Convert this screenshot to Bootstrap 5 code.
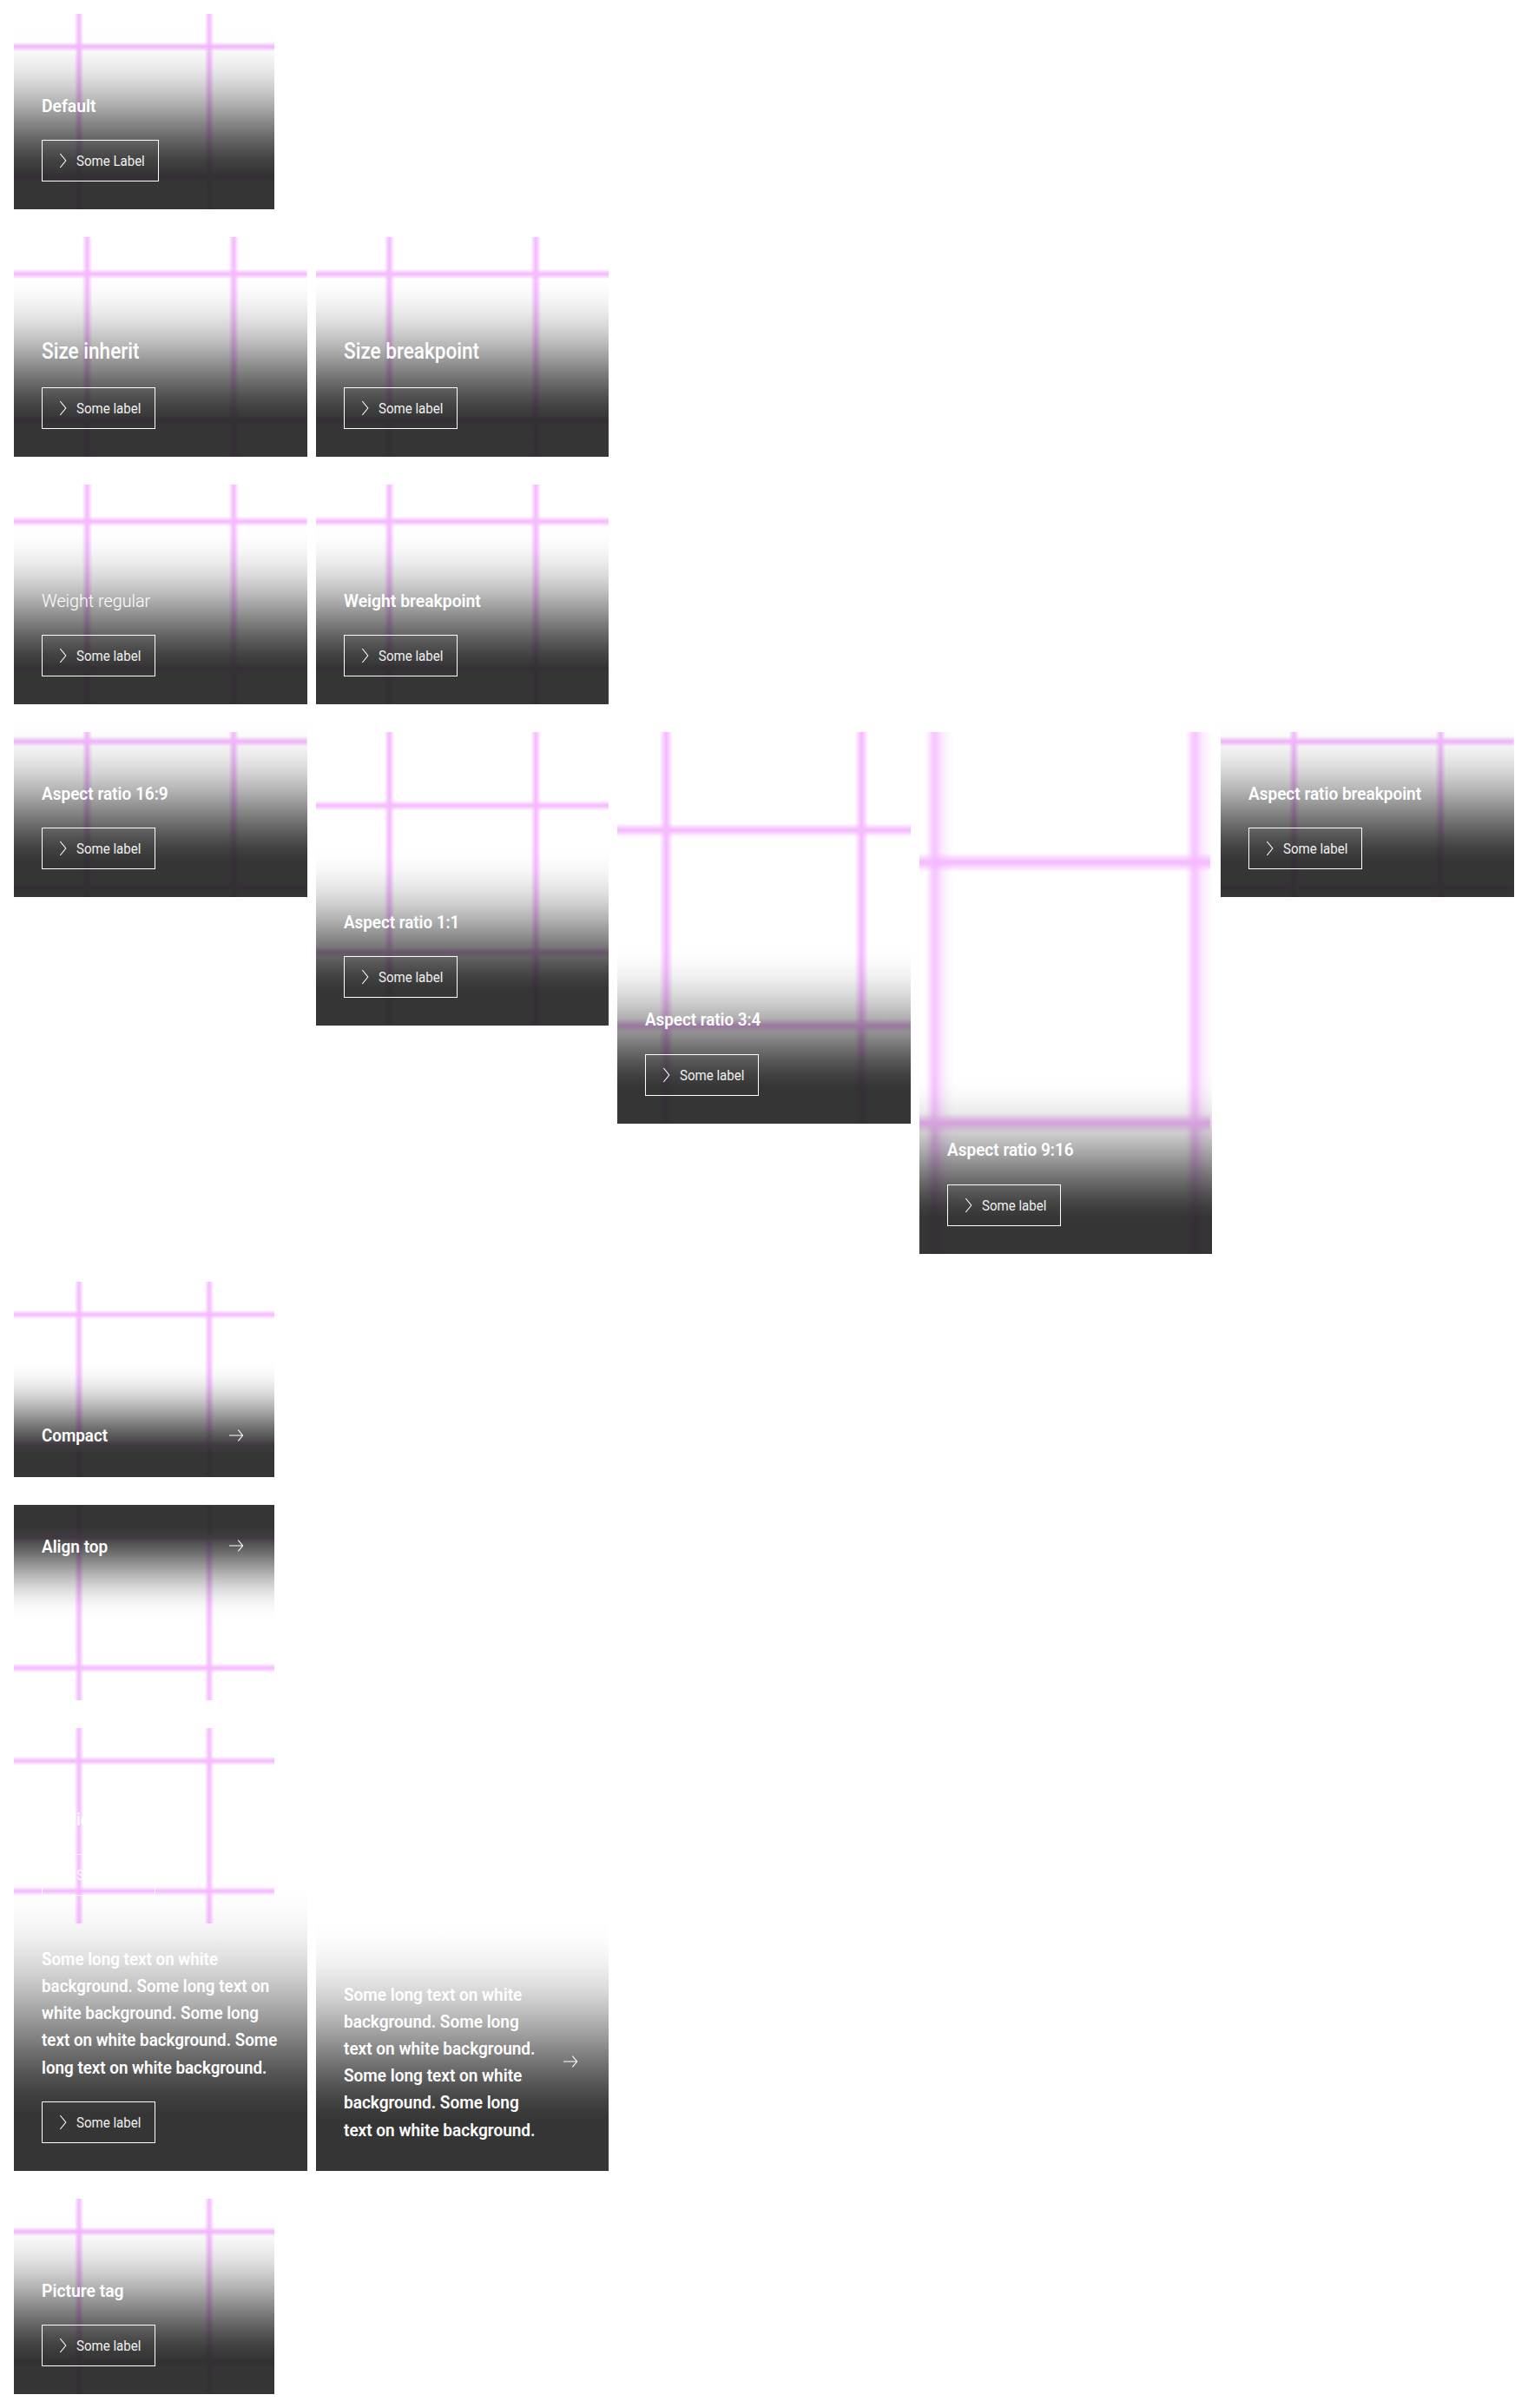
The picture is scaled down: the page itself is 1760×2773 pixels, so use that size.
<!DOCTYPE html>
<html lang="en">
<head>
<meta charset="utf-8">
<title>Link tile</title>
<link href="https://cdn.jsdelivr.net/npm/bootstrap@5.3.0/dist/css/bootstrap.min.css" rel="stylesheet">
<script src="https://cdn.jsdelivr.net/npm/bootstrap@5.3.0/dist/js/bootstrap.bundle.min.js"></script>
<style>
body{font-family:Roboto,"Liberation Sans",sans-serif;background:#fff;color:#fff}
.tile-stack{gap:32px}
.tile-row{display:grid;grid-template-columns:repeat(5,minmax(0,1fr));gap:10px;align-items:start}
.tile{display:grid;aspect-ratio:4/3;color:#fff;text-decoration:none;grid-template-rows:minmax(0,1fr);grid-template-columns:minmax(0,1fr)}
.tile:hover{color:#fff}
.tile-fixed{width:300px;height:225px}
.r169{aspect-ratio:16/9}.r11{aspect-ratio:1}.r34{aspect-ratio:3/4}.r916{aspect-ratio:9/16}
.tile>*{grid-area:1/1}
.tile-pic{width:100%;height:100%;min-height:0;display:block;overflow:hidden}
.tile-body{align-self:end;padding:71.4px 32px 32px;position:relative;gap:24px}
.shade{--dir:to top;background:linear-gradient(var(--dir),hsla(0,0%,12.2%,.9) 20%,hsla(0,0%,12.2%,.852589) 26.67%,hsla(0,0%,12.2%,.768225) 33.33%,hsla(0,0%,12.2%,.668116) 40%,hsla(0,0%,12.2%,.557309) 46.67%,hsla(0,0%,12.2%,.442691) 53.33%,hsla(0,0%,12.2%,.331884) 60%,hsla(0,0%,12.2%,.231775) 66.67%,hsla(0,0%,12.2%,.147411) 73.33%,hsla(0,0%,12.2%,.0816599) 80%,hsla(0,0%,12.2%,.03551) 86.67%,hsla(0,0%,12.2%,.0086472) 93.33%,hsla(0,0%,12.2%,0) 100%)}
.tile-top{align-self:start;padding:32px 32px 71.4px}
.tile-top.shade{--dir:to bottom}
.tile-title{--sx:.895;margin:0;font-size:21px;line-height:31.15px;font-weight:600;white-space:nowrap;transform:translateY(.8px) scaleX(var(--sx));transform-origin:0 50%}
.t-lg{--sx:.885;font-size:25.5px;line-height:37px;font-weight:500}
.t-reg{--sx:.94;font-weight:300}
.t-wide{--sx:.92}
.t-mid{--sx:.905}
.tile-btn{height:48px;border:1px solid #fff;padding:0 15px 0 11px;gap:4px;font-size:16px;line-height:24px;width:131px;white-space:nowrap}
.tile-btn.wide{width:135px}
.tile-btn span{transform:translateY(.8px) scaleX(.94);transform-origin:0 50%;opacity:.93}
.tile-icon{width:24px;height:24px;flex:none}
.tile-compact .tile-title{width:0}
</style>
</head>
<body>
<svg width="0" height="0" class="position-absolute">
<defs>
<linearGradient id="gv"><stop offset="0" stop-color="#f5baff" stop-opacity="0"/><stop offset=".4" stop-color="#f5baff" stop-opacity=".85"/><stop offset=".5" stop-color="#f5baff"/><stop offset=".6" stop-color="#f5baff" stop-opacity=".85"/><stop offset="1" stop-color="#f5baff" stop-opacity="0"/></linearGradient>
<linearGradient id="gh" x2="0" y2="1"><stop offset="0" stop-color="#f5baff" stop-opacity="0"/><stop offset=".4" stop-color="#f5baff" stop-opacity=".85"/><stop offset=".5" stop-color="#f5baff"/><stop offset=".6" stop-color="#f5baff" stop-opacity=".85"/><stop offset="1" stop-color="#f5baff" stop-opacity="0"/></linearGradient>
<linearGradient id="gs"><stop offset="0" stop-color="#f5baff" stop-opacity="0"/><stop offset=".13" stop-color="#f5baff" stop-opacity=".3"/><stop offset=".26" stop-color="#f5baff" stop-opacity=".75"/><stop offset=".34" stop-color="#f5baff" stop-opacity=".84"/><stop offset=".42" stop-color="#f5baff" stop-opacity=".72"/><stop offset=".58" stop-color="#f5baff" stop-opacity=".35"/><stop offset=".75" stop-color="#f5baff" stop-opacity=".18"/><stop offset="1" stop-color="#f5baff" stop-opacity="0"/></linearGradient>
<g id="lines"><path fill="url(#gv)" d="M69.7 0h10.6v300h-10.6z"/><path fill="url(#gv)" d="M219.7 0h10.6v300h-10.6z"/><path fill="url(#gh)" d="M0 70h300v10.6H0z"/><path fill="url(#gh)" d="M0 220h300v10.6H0z"/></g>
<g id="lines-soft"><path fill="url(#gs)" d="M69 0h16.2v300h-16.2z"/><path fill="url(#gs)" d="M218.7 0h16.2v300h-16.2z"/><path fill="url(#gh)" d="M0 69.5h233v11H0z"/><path fill="url(#gh)" d="M0 219.5h233v11H0z"/></g>
<path id="chev" d="M9.3 4 15.8 12 9.3 20" fill="none" stroke="#fff" stroke-width="1.1"/>
<path id="arr" d="M4 12h15.6M14.3 5.6 19.6 12 14.3 18.4" fill="none" stroke="#fff" stroke-width="1.1"/>
</defs>
</svg>
<main class="tile-stack d-flex flex-column p-3" id="stack"></main>
<script>
const pic = id => `<svg class="tile-pic" viewBox="0 0 300 300" preserveAspectRatio="xMidYMid slice"><use href="#${id}"/></svg>`;
const long1 = 'Some long text on white<br>background. Some long text on<br>white background. Some long<br>text on white background. Some<br>long text on white background.';
const long2 = 'Some long text on white<br>background. Some long<br>text on white background.<br>Some long text on white<br>background. Some long<br>text on white background.';
const icon = id => `<svg class="tile-icon" viewBox="0 0 24 24"><use href="#${id}"/></svg>`;
const tile = o => {
  const title = `<p class="tile-title ${o.t || ''}">${o.title}</p>`;
  const end = o.compact
    ? icon('arr')
    : `<div class="tile-btn d-flex align-items-center ${o.label ? 'wide' : ''}">${icon('chev')}<span>${o.label || 'Some label'}</span></div>`;
  const dir = o.compact ? 'tile-compact align-items-center justify-content-between' : 'flex-column align-items-start';
  return `<a class="tile ${o.c || ''}">${o.nopic ? '' : pic(o.c === 'r916' ? 'lines-soft' : 'lines')}<div class="tile-body d-flex ${dir} ${o.plain ? '' : 'shade'} ${o.top ? 'tile-top' : ''}">${title}${end}</div></a>`;
};
const single = o => tile({...o, c: 'tile-fixed'});
const row = (...a) => `<div class="tile-row">${a.map(tile).join('')}</div>`;
document.getElementById('stack').innerHTML = [
  single({title: 'Default', label: 'Some Label', t: 't-wide'}),
  row({title: 'Size inherit', t: 't-lg'}, {title: 'Size breakpoint', t: 't-lg'}),
  row({title: 'Weight regular', t: 't-reg'}, {title: 'Weight breakpoint', t: 't-wide'}),
  row({title: 'Aspect ratio 16:9', c: 'r169', t: 't-mid'}, {title: 'Aspect ratio 1:1', c: 'r11'}, {title: 'Aspect ratio 3:4', c: 'r34'}, {title: 'Aspect ratio 9:16', c: 'r916', t: 't-mid'}, {title: 'Aspect ratio breakpoint', c: 'r169', t: 't-mid'}),
  single({title: 'Compact', compact: 1}),
  single({title: 'Align top', compact: 1, top: 1, t: 't-mid'}),
  single({title: 'Gradient', plain: 1}),
  row({title: long1, nopic: 1}, {title: long2, nopic: 1, compact: 1, t: 't-mid'}),
  single({title: 'Picture tag', t: 't-wide'})
].join('');
</script>
</body>
</html>
